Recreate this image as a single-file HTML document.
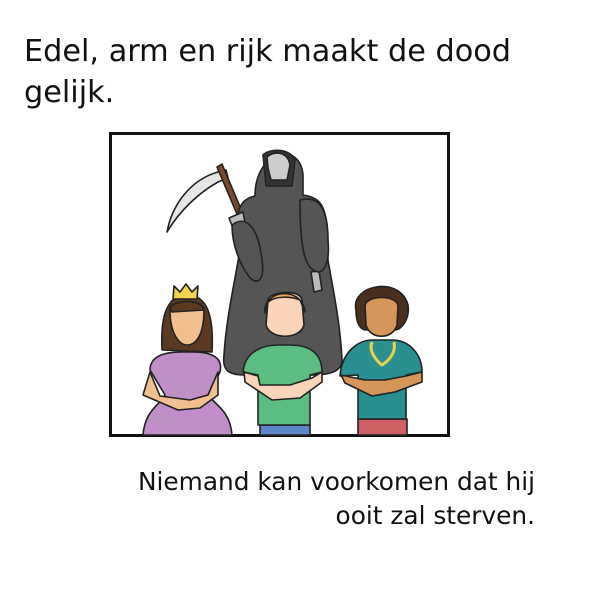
<!DOCTYPE html>
<html><head><style>
body{margin:0;width:591px;height:591px;background:#fff;font-family:"Liberation Sans","DejaVu Sans",sans-serif;position:relative;overflow:hidden}
.t{position:absolute;left:24px;top:31px;font-size:30.3px;line-height:41px;color:#111;font-family:"DejaVu Sans",sans-serif}
.c{position:absolute;right:56px;top:465px;font-size:24.8px;line-height:34px;text-align:right;color:#111;font-family:"DejaVu Sans",sans-serif;white-space:nowrap}
svg{position:absolute;left:0;top:0}
</style></head><body>
<div class="t">Edel, arm en rijk maakt de dood<br>gelijk.</div>
<svg width="591" height="591" viewBox="0 0 591 591">
<rect x="110.5" y="133.5" width="338" height="302" fill="#fff" stroke="#111" stroke-width="3"/>
<g stroke="#222" stroke-width="1.6" stroke-linejoin="round">
<path d="M167,232 C172,205 190,180 218,172 L226,170 L228,178 L218,182 C200,192 180,210 167,232Z" fill="#e6e6e6"/>
<path d="M217,167 L222,164 L275,290 L270,292Z" fill="#7a4a2a"/>
<path d="M255,196 C255,150 300,140 303,175 L303,195 C325,198 328,210 328,260 C333,290 340,320 342,360 C342,372 330,376 300,375 L245,375 C228,375 222,370 224,355 C226,320 235,280 240,250 L238,225 C236,205 245,198 255,196Z" fill="#555"/>
<path d="M263,155 C270,148 290,148 295,160 L292,186 L266,186Z" fill="#333"/>
<path d="M267,157 C275,150 288,152 290,165 L287,180 L271,180 L268,168Z" fill="#ccc"/>
<path d="M229,218 L243,212 L247,233 L236,236Z" fill="#bbb"/>
<path d="M232,225 C245,215 258,225 262,260 C265,280 258,285 250,278 C240,265 232,245 232,225Z" fill="#555"/>
<path d="M311,272 L319,271 L322,290 L314,292Z" fill="#bbb"/>
<path d="M300,200 C320,195 328,210 328,240 C330,260 325,272 318,272 C305,270 300,250 300,200Z" fill="#555"/>
<path d="M162,350 C160,310 170,295 187,295 C207,295 214,315 212,352Z" fill="#5c3a22"/>
<path d="M173,299 L174,286 L180,292 L186,284 L192,292 L198,286 L197,299Z" fill="#f3d34f"/>
<path d="M170,310 C170,335 180,345 187,345 C196,345 204,335 204,310Z" fill="#f2c08e"/>
<path d="M170,308 C172,300 202,298 204,310 L172,312Z" fill="#5c3a22"/>
<path d="M143,435 C145,410 160,405 165,395 L150,370 C150,350 180,352 187,352 C195,352 225,350 220,372 L208,395 C215,405 230,410 232,435Z" fill="#c08fc8"/>
<path d="M150,372 L143,395 L178,410 L200,408 L218,395 L218,372 L208,395 L190,400 L160,396Z" fill="#f2c08e"/>
<path d="M268,300 C268,292 300,288 302,300 L304,325 C300,340 270,340 266,325Z" fill="#fad4b8"/>
<path d="M265,313 C262,290 302,285 305,312 L300,300 C290,296 275,296 268,302Z" fill="#f0aa55"/>
<path d="M260,425 L310,425 L310,435 L260,435Z" fill="#5d86c8"/>
<path d="M258,425 L258,375 L243,372 C245,350 265,345 278,345 L290,345 C305,345 322,350 322,372 L310,375 L310,425Z" fill="#5cbd82"/>
<path d="M244,372 L245,382 L272,400 L300,398 L322,382 L322,372 L312,378 L290,385 L260,385 L258,376Z" fill="#fad4b8"/>
<path d="M356,310 C350,285 400,275 408,305 C410,318 402,330 395,330 L365,330 C358,328 356,320 356,310Z" fill="#4a2e1e"/>
<path d="M365,305 C368,295 395,295 398,305 L397,325 C393,340 370,340 366,325Z" fill="#d6965a"/>
<path d="M358,419 L407,419 L407,435 L358,435Z" fill="#cf5f65"/>
<path d="M358,419 L358,375 L340,376 C342,350 360,340 372,340 L392,340 C410,340 422,355 422,372 L406,375 L406,419Z" fill="#2a8f90"/>
<path d="M372,342 C368,352 378,362 382,365 C390,360 396,352 394,342" fill="none" stroke="#e8d24a" stroke-width="3"/>
<path d="M341,375 L345,383 L372,396 L395,392 L422,382 L422,372 L406,376 L385,380 L365,380Z" fill="#d6965a"/>
</g>
</svg>
<div class="c">Niemand kan voorkomen dat hij<br>ooit zal sterven.</div>
</body></html>
